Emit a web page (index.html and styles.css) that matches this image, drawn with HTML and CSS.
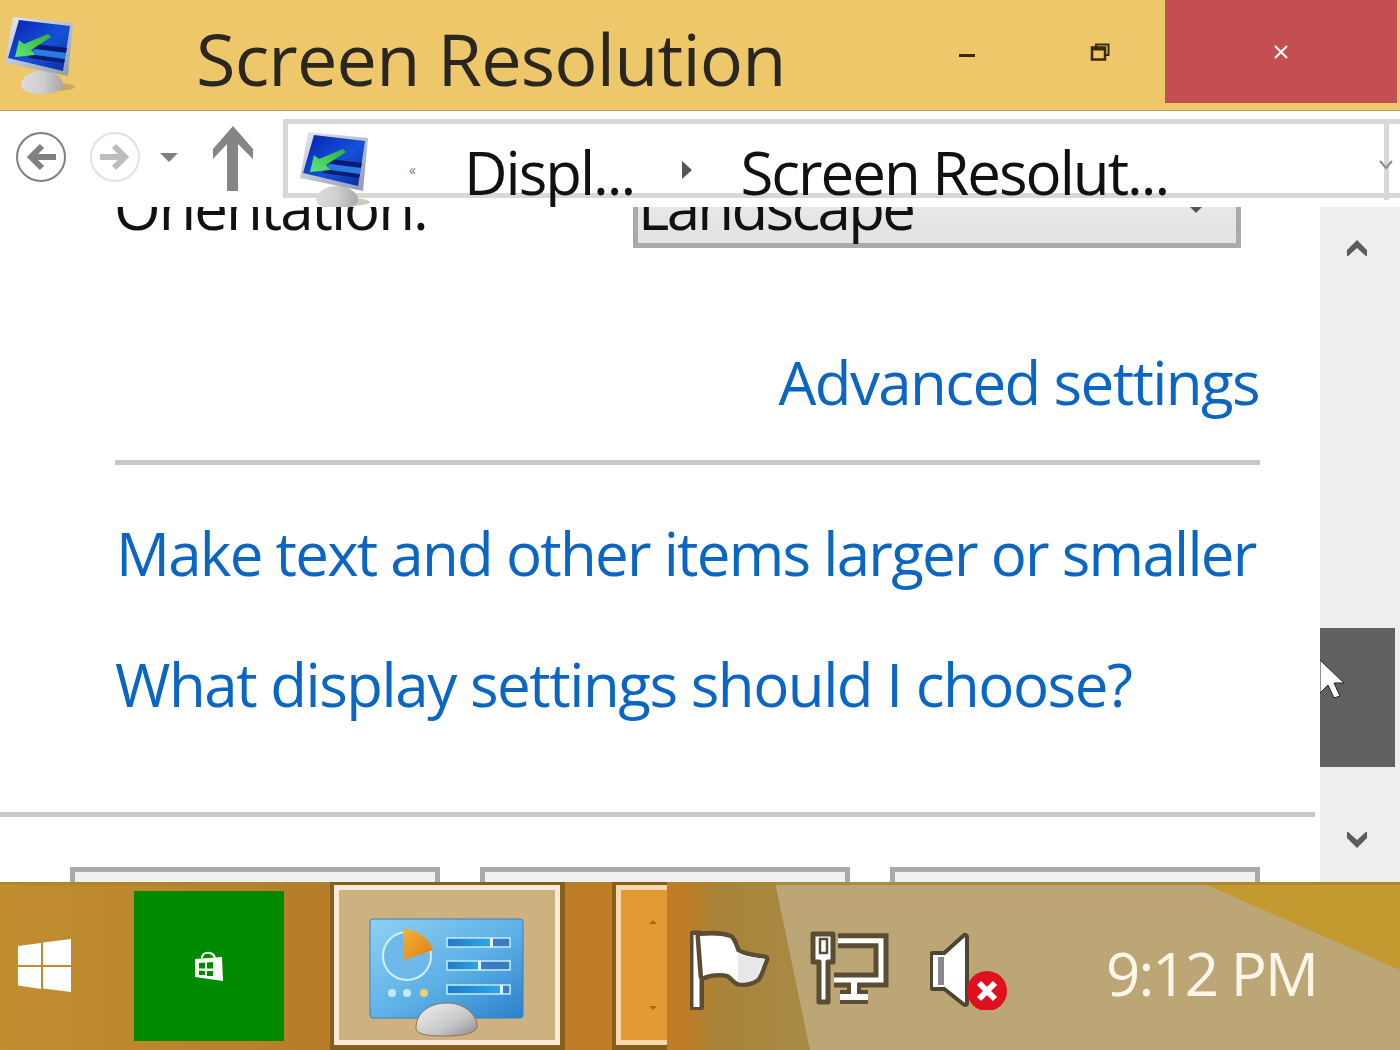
FILE: index.html
```html
<!DOCTYPE html>
<html lang="en">
<head>
<meta charset="utf-8">
<title>Screen Resolution</title>
<link rel="stylesheet" href="styles.css">
</head>
<body>
<svg class="defs" width="0" height="0" aria-hidden="true">
  <defs>
    <linearGradient id="scr" x1="0" y1="0" x2="1" y2="1"><stop offset="0" stop-color="#0a1fb0"/><stop offset=".55" stop-color="#1452d8"/><stop offset="1" stop-color="#0b2a9a"/></linearGradient>
    <linearGradient id="frm" x1="0" y1="0" x2="1" y2="1"><stop offset="0" stop-color="#e4e9f2"/><stop offset="1" stop-color="#8f99ad"/></linearGradient>
    <linearGradient id="grn" x1="1" y1="0" x2="0" y2="1"><stop offset="0" stop-color="#2fae3c"/><stop offset="1" stop-color="#62e878"/></linearGradient>
    <linearGradient id="pan" x1="0" y1="0" x2="1" y2="1"><stop offset="0" stop-color="#8fd0f2"/><stop offset=".55" stop-color="#5cb0e6"/><stop offset="1" stop-color="#2b80cc"/></linearGradient>
    <linearGradient id="bar" x1="0" y1="0" x2="1" y2="0"><stop offset="0" stop-color="#1f7cc8"/><stop offset="1" stop-color="#2ba8ec"/></linearGradient>
    <linearGradient id="dom" x1="0" y1="0" x2="1" y2="1"><stop offset="0" stop-color="#f0f0f0"/><stop offset=".6" stop-color="#c8c8c8"/><stop offset="1" stop-color="#8a8a90"/></linearGradient>
    <linearGradient id="org" x1="0" y1="0" x2="1" y2="1"><stop offset="0" stop-color="#f5b13a"/><stop offset="1" stop-color="#dd7f12"/></linearGradient>
    <linearGradient id="stand" x1="0" y1="0" x2="1" y2="0"><stop offset="0" stop-color="#dcdcdc"/><stop offset=".5" stop-color="#cfcfcf"/><stop offset="1" stop-color="#a8a8a8"/></linearGradient>
    <symbol id="monitor" viewBox="0 0 72 78">
      <ellipse cx="48" cy="70" rx="22" ry="4" fill="#8a7a55" opacity=".4"/>
      <path d="M16 68C16 60 26 54 37 54S58 60 58 68C58 74 48 77 37 77S16 74 16 68z" fill="url(#stand)"/>
      <path d="M8 0L68 6 63 59 0 46z" fill="url(#frm)"/>
      <path d="M14 3L65 9 58 54 3 41z" fill="url(#scr)"/>
      <path d="M30 27L62 31 61 36 29 32zM24 37L60 42 59 46 23 41z" fill="#0a1c70"/>
      <path d="M30 32L61 36 60 42 24 37z" fill="#2a7ae8"/>
      <path d="M10 40L14 23 19 27 43 17 46 20 26 33 30 38z" fill="url(#grn)"/>
    </symbol>
  </defs>
</svg>
<div class="window">
  <header class="titlebar">
    <svg class="monitor-title"><use href="#monitor"/></svg>
    <h1 class="title">Screen Resolution</h1>
    <div class="caption">
      <span class="cap-btn"><svg width="18" height="18" viewBox="0 0 18 18"><path d="M1 12.500h16" stroke="#3a2a0c" stroke-width="3"/></svg></span>
      <span class="cap-btn cap-restore"><svg width="20" height="18" viewBox="0 0 20 18"><path d="M6 4V1.500h12.500V12H15" fill="none" stroke="#3a2a0c" stroke-width="2"/><rect x="2" y="4.500" width="13" height="12" fill="none" stroke="#3a2a0c" stroke-width="2.500"/><path d="M2 6h13" stroke="#3a2a0c" stroke-width="3"/></svg></span>
      <span class="cap-close"><svg width="16" height="16" viewBox="0 0 16 16"><path d="M2 2l12 12M14 2L2 14" stroke="#fff" stroke-width="2"/></svg></span>
    </div>
  </header>

  <nav class="toolbar">
    <svg class="nav-circle" width="52" height="52" viewBox="0 0 52 52"><circle cx="26" cy="26" r="24" fill="#fff" stroke="#808080" stroke-width="2"/><path d="M41 26H18M27 15L16 26l11 11" fill="none" stroke="#808080" stroke-width="6"/></svg>
    <svg class="nav-circle nav-fwd" width="52" height="52" viewBox="0 0 52 52"><circle cx="26" cy="26" r="24" fill="#fff" stroke="#e2e2e2" stroke-width="2"/><path d="M11 26h23M25 15l11 11-11 11" fill="none" stroke="#bdbdbd" stroke-width="6"/></svg>
    <span class="nav-drop"></span>
    <svg class="nav-up" width="42" height="66" viewBox="0 0 42 66"><path d="M21 0L41 23v10L26 18V65H15V18L1 33V23z" fill="#858585"/></svg>
    <div class="address">
      <span class="addr-icon"><svg class="monitor-addr"><use href="#monitor"/></svg></span>
      <span class="crumb-more">«</span>
      <span class="crumb crumb-a">Displ...</span>
      <span class="crumb-sep"></span>
      <span class="crumb crumb-b">Screen Resolut...</span>
      <span class="addr-split"></span>
      <svg class="addr-chev" width="14" height="10" viewBox="0 0 14 10"><path d="M1 1l6 7 6-7" fill="none" stroke="#8a8a8a" stroke-width="2"/></svg>
    </div>
  </nav>

  <main class="body">
    <section class="pane">
      <div class="settings">
        <div class="row-orient">
          <span class="label">Orientation:</span>
          <div class="select"><span class="select-text">Landscape</span><span class="select-arrow"></span></div>
        </div>
        <a class="link link-adv">Advanced settings</a>
        <hr class="rule rule-mid">
        <a class="link link-make">Make text and other items larger or smaller</a>
        <a class="link link-what">What display settings should I choose?</a>
      </div>
      <hr class="rule rule-foot">
      <div class="buttons"><span class="btn"></span><span class="btn"></span><span class="btn"></span></div>
    </section>
    <aside class="scrollbar">
      <svg class="sb-up" width="20" height="16" viewBox="0 0 20 16"><path d="M10 0L20 10v7L10 8 0 17v-7z" fill="#5c5c5c"/></svg>
      <div class="thumb"></div>
      <svg class="sb-down" width="20" height="16" viewBox="0 0 20 16"><path d="M10 16L20 6V-1L10 8 0-1v7z" fill="#5c5c5c"/></svg>
      <svg class="cursor" width="26" height="40" viewBox="0 0 26 40"><path d="M0 0L24 23H14L20 36 14 38 8 25 0 33z" fill="#fff" stroke="#222" stroke-width="1"/></svg>
    </aside>
  </main>

  <footer class="taskbar">
    <svg class="wallpaper" width="1400" height="168" viewBox="0 0 1400 168" preserveAspectRatio="none">
      <defs>
        <linearGradient id="wl" x1="0" y1="0" x2="1" y2="0"><stop offset="0" stop-color="#c18e30"/><stop offset=".42" stop-color="#b57c28"/><stop offset=".84" stop-color="#c27c26"/><stop offset=".89" stop-color="#a8843a"/><stop offset="1" stop-color="#a88a45"/></linearGradient>
      </defs>
      <rect width="1400" height="168" fill="#bca675"/>
      <path d="M0 0H775L810 168H0z" fill="url(#wl)"/>
      <path d="M1200 0H1400V88z" fill="#c29a30"/>
      <rect width="1400" height="3" fill="#a8842e" opacity=".8"/>
    </svg>
    <span class="start"><svg width="54" height="54" viewBox="0 0 54 54"><path d="M0 8L23 5V27H0zM25 4.500L53 1V27H25zM0 29H23V51L0 47.500zM25 29H53V54L25 50.500z" fill="#fff"/></svg></span>
    <span class="tile"><svg width="28" height="30" viewBox="0 0 28 30"><path d="M7 7C7 0 18 0 20 7" fill="none" stroke="#fff" stroke-width="2"/><path fill-rule="evenodd" d="M0 8L27 6 28 30 0 26zM4 12V17.500H10V11.500zM12 11.500V17.500H18V11zM4 19.500V24H10V20zM12 20V25H18V20z" fill="#fff"/></svg></span>
    <span class="app">
      <svg width="156" height="120" viewBox="0 0 156 120">
        <rect x="1" y="1" width="153" height="99" rx="3" fill="url(#pan)" stroke="#3c7fc0"/>
        <circle cx="38" cy="38" r="24" fill="#6fb8ea" stroke="#d4eefc" stroke-width="2"/>
        <path d="M34 11C48 11 60 20 64 32L35 42z" fill="url(#org)"/>
        <g fill="#3a7cc0" stroke="#c8ecfc" stroke-width="1.500">
          <rect x="78" y="20" width="63" height="9"/><rect x="78" y="43" width="63" height="9"/><rect x="78" y="67" width="63" height="9"/>
        </g>
        <rect x="79" y="21" width="43" height="7" fill="url(#bar)"/><rect x="79" y="44" width="32" height="7" fill="url(#bar)"/><rect x="79" y="68" width="52" height="7" fill="url(#bar)"/>
        <rect x="121" y="20" width="3" height="9" fill="#e4f6ff"/><rect x="109" y="43" width="3" height="9" fill="#e4f6ff"/><rect x="131" y="67" width="3" height="9" fill="#e4f6ff"/>
        <circle cx="23" cy="75" r="4" fill="#bfeaff"/><circle cx="38" cy="75" r="4" fill="#bfeaff"/><circle cx="55" cy="75" r="4" fill="#f4cf70"/>
        <path d="M47 110C47 95 60 85 78 85S108 97 108 108C108 116 90 118 78 118S47 118 47 110z" fill="url(#dom)" stroke="#8d6f50"/>
      </svg>
    </span>
    <span class="overflow">
      <span class="ov-up"></span>
      <span class="ov-down"></span>
    </span>
    <span class="tray">
      <svg class="tray-flag" width="80" height="80" viewBox="0 0 80 80">
        <g stroke="#5a4d33" stroke-width="9" paint-order="stroke" stroke-linejoin="round" fill="#fff">
          <rect x="3.500" y="5" width="6" height="72"/>
          <path d="M10 6C20 5 32 5 40 8 44 12 45 18 47 22 55 27 65 27 75 29 72 36 71 42 67 48 60 53 54 53 48 52 44 50 42 46 38 44 30 42 20 43 13 46z"/>
        </g>
        <path d="M48 22C55 27 65 27 75 29 72 36 71 42 67 48 60 53 54 53 48 52z" fill="#e8e8e8"/>
      </svg>
      <svg class="tray-net" width="80" height="80" viewBox="0 0 80 80">
        <path d="M28 10.700H71V50H24" fill="none" stroke="#5a4d33" stroke-width="15"/>
        <path d="M28 10.700H71V50H24" fill="none" stroke="#fff" stroke-width="5"/>
        <path d="M30 67H58M44 56V66" stroke="#5a4d33" stroke-width="14"/>
        <path d="M30 67H58M44 52V66" stroke="#fff" stroke-width="6"/>
        <path d="M3 4H23V32H18V72H9V32H3z" fill="#fff" stroke="#5a4d33" stroke-width="5" stroke-linejoin="round"/>
        <rect x="10" y="9" width="7" height="14" fill="#fff" stroke="#5a4d33" stroke-width="2.500"/>
      </svg>
      <svg class="tray-vol" width="80" height="80" viewBox="0 0 80 80">
        <path d="M3 25H15L35 7V73L15 57H3z" fill="#fff" stroke="#4e4532" stroke-width="8" paint-order="stroke" stroke-linejoin="round"/>
        <rect x="8" y="27" width="6" height="28" fill="#8a8a8a"/>
        <circle cx="57" cy="61" r="20" fill="#e0101e"/>
        <path d="M49 53l16 16M65 53L49 69" stroke="#fff" stroke-width="6"/>
      </svg>
    </span>
    <time class="clock">9:12 PM</time>
  </footer>
</div>
</body>
</html>
```

FILE: styles.css
```css
* { box-sizing: border-box; }
html, body { margin: 0; height: 100%; }
body { font-family: "Open Sans", "Noto Sans", "Liberation Sans", sans-serif; overflow: hidden; background: #fff; }
.defs { position: absolute; }
.window { width: 1400px; height: 1050px; display: flex; flex-direction: column; overflow: hidden; }

.titlebar { height: 111px; flex: none; background: #eec76b; border-bottom: 1px solid #b49c62; display: flex; align-items: flex-start; padding-left: 5px; }
.monitor-title { width: 72px; height: 78px; margin-top: 17px; flex: none; }
.title { margin: 10px 0 0 119px; font-size: 72px; line-height: 96px; font-weight: 400; color: #2a2620; letter-spacing: -0.8px; white-space: nowrap; width: 762px; flex: none; }
.caption { display: flex; align-items: flex-start; }
.cap-btn { width: 18px; height: 18px; margin-top: 43px; display: block; }
.cap-btn svg { display: block; }
.cap-restore { margin-left: 114px; }
.cap-close { width: 232px; height: 103px; margin-left: 57px; background: #c44f52; display: flex; align-items: center; justify-content: center; }

.toolbar { height: 96px; flex: none; background: #fff; display: flex; align-items: flex-start; padding-left: 15px; position: relative; z-index: 2; overflow: hidden; }
.nav-circle { margin-top: 20px; flex: none; }
.nav-fwd { margin-left: 22px; }
.nav-drop { width: 0; height: 0; margin: 42px 0 0 19px; border-left: 9px solid transparent; border-right: 9px solid transparent; border-top: 9px solid #808080; flex: none; }
.nav-up { margin: 15px 0 0 34px; flex: none; }
.address { margin: 8px 0 0 29px; width: 1120px; height: 79px; border: 5px solid #d8d8d8; border-right: 0; display: flex; align-items: flex-start; flex: none; position: relative; }
.addr-icon { display: block; width: 72px; height: 75px; margin: 8px 0 0 12px; overflow: hidden; flex: none; }
.monitor-addr { width: 72px; height: 78px; display: block; }
.crumb-more { font-size: 14px; line-height: 18px; margin: 37px 0 0 37px; color: #777; flex: none; }
.crumb { font-size: 60px; line-height: 80px; color: #111; white-space: nowrap; flex: none; margin-top: 8px; letter-spacing: -2px; }
.crumb-a { margin-left: 48px; }
.crumb-sep { width: 0; height: 0; margin: 37px 0 0 48px; border-top: 9px solid transparent; border-bottom: 9px solid transparent; border-left: 10px solid #555; flex: none; }
.crumb-b { margin-left: 48px; }
.addr-split { position: absolute; left: 1096px; top: -5px; width: 5px; height: 81px; background: #d8d8d8; }
.addr-chev { position: absolute; left: 1091px; top: 36px; }

.body { flex: 1; min-height: 0; display: flex; overflow: hidden; }
.pane { width: 1320px; flex: none; background: #fff; overflow: hidden; }
.settings { padding: 0 60px 0 115px; display: flex; flex-direction: column; }
.row-orient { display: flex; align-items: flex-start; margin-top: -40px; height: 81px; }
.label { font-size: 60px; line-height: 80px; color: #111; letter-spacing: -2px; width: 518px; flex: none; margin-left: -1px; }
.select { width: 608px; height: 81px; margin-left: 1px; background: linear-gradient(#eeeeee, #e2e2e2); border-right: 5px solid #aaa; border-bottom: 5px solid #aaa; border-left: 5px solid #aaa; display: flex; align-items: flex-start; position: relative; }
.select-text { font-size: 60px; line-height: 80px; color: #111; letter-spacing: -2.65px; }
.select-arrow { position: absolute; right: 34px; top: 40px; width: 0; height: 0; border-left: 6px solid transparent; border-right: 6px solid transparent; border-top: 6px solid #555; }
.link { font-size: 60px; line-height: 80px; color: #0a66c2; white-space: nowrap; display: block; }
.link-adv { align-self: flex-end; margin: 94px 1px 0 0; letter-spacing: -1.6px; }
.rule { border: 0; height: 5px; background: #c8c8c8; margin: 0; }
.rule-mid { margin-top: 38px; }
.link-make { margin-top: 48px; margin-left: 1px; letter-spacing: -1.72px; }
.link-what { margin-top: 51px; letter-spacing: -1.45px; }
.rule-foot { margin: 88px 5px 0 0; }
.buttons { display: grid; grid-template-columns: repeat(3, 370px); gap: 40px; margin: 50px 0 0 70px; }
.btn { height: 60px; background: #f0f0f0; border: 5px solid #aaa; display: block; }

.scrollbar { flex: 1; background: #eeeeee; display: flex; flex-direction: column; align-items: flex-start; position: relative; }
.sb-up { margin: 33px 0 0 27px; }
.thumb { width: 75px; height: 139px; background: #616161; margin-top: 372px; }
.sb-down { margin: 65px 0 0 27px; }
.cursor { position: absolute; left: 0; top: 453px; }

.taskbar { height: 168px; flex: none; position: relative; display: flex; align-items: flex-start; color: #fff; overflow: hidden; }
.wallpaper { position: absolute; inset: 0; }
.start, .tile, .app, .overflow, .tray, .clock { position: relative; flex: none; }
.start { margin: 56px 0 0 18px; width: 54px; height: 54px; }
.start svg { display: block; }
.tile { width: 150px; height: 150px; background: #008a00; margin: 9px 0 0 62px; display: flex; align-items: center; justify-content: center; }
.app { width: 235px; height: 168px; margin: 0 0 0 46px; border-style: solid; border-color: #86601a; border-width: 3px 5px 5px 4px; background: #cdb17f; display: flex; justify-content: center; align-items: flex-start; padding-top: 33px; box-shadow: inset 0 0 0 5px #fbeadb; }
.overflow { width: 55px; height: 168px; margin-left: 47px; background: #e39a35; border-style: solid; border-color: #86601a; border-width: 3px 0 5px 4px; box-shadow: inset 5px 5px 0 #f7d9ad, inset 0 -5px 0 #f7d9ad; display: block; }
.ov-up, .ov-down { position: absolute; left: 33px; width: 0; height: 0; border-left: 4px solid transparent; border-right: 4px solid transparent; }
.ov-up { top: 35px; border-bottom: 4px solid #a8661f; }
.ov-down { top: 121px; border-top: 4px solid #a8661f; }
.tray { display: flex; align-items: flex-start; margin: 48px 0 0 23px; gap: 40px; }
.tray svg { display: block; }
.clock { font-size: 60px; line-height: 80px; margin: 51px 0 0 96px; color: #fff6ea; letter-spacing: -1.9px; white-space: nowrap; font-weight: 400; }
```
